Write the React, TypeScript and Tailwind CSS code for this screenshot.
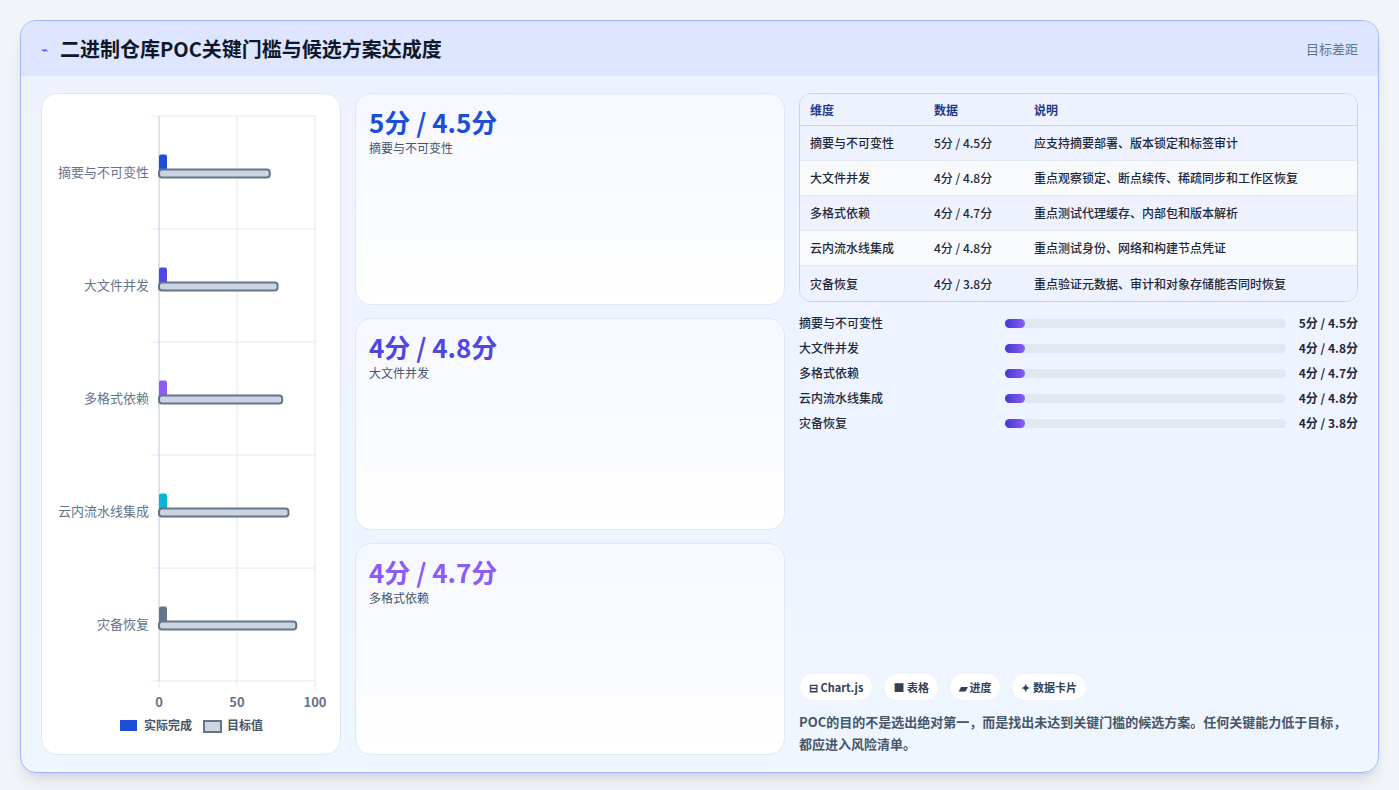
const rows = [
  { name: "摘要与不可变性", val: "5分 / 4.5分", note: "应支持摘要部署、版本锁定和标签审计", target: 71, color: "#1d4ed8" },
  { name: "大文件并发", val: "4分 / 4.8分", note: "重点观察锁定、断点续传、稀疏同步和工作区恢复", target: 76, color: "#4f46e5" },
  { name: "多格式依赖", val: "4分 / 4.7分", note: "重点测试代理缓存、内部包和版本解析", target: 79, color: "#8b5cf6" },
  { name: "云内流水线集成", val: "4分 / 4.8分", note: "重点测试身份、网络和构建节点凭证", target: 83, color: "#06b6d4" },
  { name: "灾备恢复", val: "4分 / 3.8分", note: "重点验证元数据、审计和对象存储能否同时恢复", target: 88, color: "#64748b" },
];

const font = { fontFamily: '"Noto Sans CJK SC", "Noto Sans", sans-serif' };

function Chart() {
  const x0 = 117, w = 156, top = 22, band = 113;
  return (
    <svg width="298" height="660" className="block">
      {[0, 50, 100].map((t) => (
        <line key={t} x1={x0 + (w * t) / 100} x2={x0 + (w * t) / 100} y1={top} y2={top + band * 5 + 6} stroke="#e2e8f0" />
      ))}
      {[0, 1, 2, 3, 4, 5].map((i) => (
        <line key={i} x1={x0 - 8} x2={x0 + w} y1={top + band * i} y2={top + band * i} stroke="#e2e8f0" />
      ))}
      <line x1={x0} x2={x0} y1={top} y2={top + band * 5} stroke="#cbd5e1" />
      {rows.map((r, i) => {
        const cy = top + band * i + band / 2;
        return (
          <g key={r.name}>
            <text x={x0 - 10} y={cy + 4} textAnchor="end" fontSize="13" fill="#64748b">{r.name}</text>
            <rect x={x0} y={cy - 18} width="8" height="18" rx="2" fill={r.color} />
            <rect x={x0} y={cy - 3} width={(w * r.target) / 100} height="8" rx="3" fill="#cbd5e1" stroke="#64748b" strokeWidth="2" />
          </g>
        );
      })}
      {[0, 50, 100].map((t) => (
        <text key={t} x={x0 + (w * t) / 100} y={top + band * 5 + 26} textAnchor="middle" fontSize="13" fontWeight="600" fill="#64748b">{t}</text>
      ))}
      <rect x="78" y="626" width="17" height="11" fill="#1d4ed8" />
      <text x="102" y="636" fontSize="12" fontWeight="600" fill="#475569">实际完成</text>
      <rect x="162" y="627" width="17" height="11" fill="#cbd5e1" stroke="#64748b" strokeWidth="2" />
      <text x="185" y="636" fontSize="12" fontWeight="600" fill="#475569">目标值</text>
    </svg>
  );
}

export default function App() {
  return (
    <div className="w-[1399px] h-[790px] bg-[#f1f5f9] p-5" style={font}>
      <div className="h-[753px] w-[1359px] rounded-2xl border border-[#a5b4fc] bg-gradient-to-b from-[#eef2ff] to-[#eff6ff] overflow-hidden shadow-lg flex flex-col">
        <div className="h-[55px] shrink-0 bg-[#dde6fe] flex items-center justify-between px-5">
          <div className="flex items-center gap-3">
            <span className="text-[#4f46e5] text-xs">⌁</span>
            <h1 className="text-xl font-bold text-[#0f172a]">二进制仓库POC关键门槛与候选方案达成度</h1>
          </div>
          <span className="text-[13px] text-[#64748b]">目标差距</span>
        </div>
        <div className="flex gap-[14px] px-5 pt-[17px] pb-5 flex-1">
          <div className="w-[300px] bg-white rounded-2xl border border-[#e2e8f0] overflow-hidden">
            <Chart />
          </div>
          <div className="w-[430px] flex flex-col gap-[13px]">
            {rows.slice(0, 3).map((r) => (
              <div key={r.name} className="h-[212px] rounded-2xl border border-[#e2e8f0] bg-gradient-to-b from-[#f5f8ff] to-white px-[13px] py-[10px]">
                <div className="text-[26px] font-bold leading-9" style={{ color: r.color }}>{r.val}</div>
                <div className="text-xs text-[#475569]">{r.name}</div>
              </div>
            ))}
          </div>
          <div className="flex-1 flex flex-col">
            <div className="rounded-xl border border-[#cbd5e1] overflow-hidden text-xs text-[#1e293b]">
              <div className="flex h-8 items-center bg-[#eef2ff] border-b border-[#cbd5e1] font-semibold text-[#1e3a8a]">
                <div className="w-[134px] pl-[10px]">维度</div>
                <div className="w-[100px]">数据</div>
                <div>说明</div>
              </div>
              {rows.map((r, i) => (
                <div key={r.name} className={`flex h-[35px] items-center font-medium ${i % 2 ? "bg-[#f8fafc]" : "bg-[#eef2ff]"} ${i < 4 ? "border-b border-[#e2e8f0]" : ""}`}>
                  <div className="w-[134px] pl-[10px]">{r.name}</div>
                  <div className="w-[100px]">{r.val}</div>
                  <div>{r.note}</div>
                </div>
              ))}
            </div>
            <div className="flex flex-col gap-[7px] mt-[12px]">
              {rows.map((r) => (
                <div key={r.name} className="flex items-center h-[18px] text-xs font-medium text-[#1e293b]">
                  <div className="w-[206px]">{r.name}</div>
                  <div className="flex-1 h-[9px] rounded-full bg-[#e2e8f0]">
                    <div className="h-full w-[20px] rounded-full bg-gradient-to-r from-[#4338ca] to-[#8b5cf6]" />
                  </div>
                  <div className="w-[72px] text-right font-bold">{r.val}</div>
                </div>
              ))}
            </div>
            <div className="flex-1" />
            <div className="flex gap-[10px] text-[11px] font-semibold text-[#334155]">
              {["⊟ Chart.js", "■ 表格", "▰ 进度", "✦ 数据卡片"].map((c) => (
                <span key={c} className="h-7 px-[9px] flex items-center rounded-full bg-white border border-[#eef2ff]">{c}</span>
              ))}
            </div>
            <p className="mt-[10px] text-[13px] leading-[22px] font-semibold text-[#475569]">
              POC的目的不是选出绝对第一，而是找出未达到关键门槛的候选方案。任何关键能力低于目标，都应进入风险清单。
            </p>
          </div>
        </div>
      </div>
    </div>
  );
}
